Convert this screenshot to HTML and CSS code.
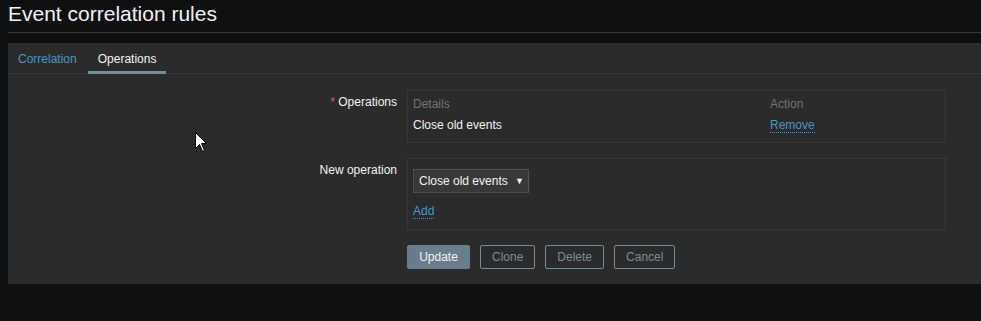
FILE: index.html
```html
<!DOCTYPE html>
<html lang="en">
<head>
    <meta charset="UTF-8">
    <title>Event correlation rules</title>
    <link rel="stylesheet" href="styles.css">
</head>
<body>
    <div class="page">
        <div class="header-title">
            <h1>Event correlation rules</h1>
        </div>

        <div class="panel">
            <ul class="tabs">
                <li><a href="#">Correlation</a></li>
                <li class="active"><a href="#">Operations</a></li>
            </ul>

            <div class="form">
                <div class="form-row">
                    <label class="form-label"><span class="required">*</span> Operations</label>
                    <div class="form-field">
                        <div class="field-box ops-table">
                            <div class="th">Details</div>
                            <div class="th">Action</div>
                            <div class="td">Close old events</div>
                            <div class="td"><a class="link" href="#">Remove</a></div>
                        </div>
                    </div>
                </div>

                <div class="form-row">
                    <label class="form-label">New operation</label>
                    <div class="form-field">
                        <div class="field-box new-op">
                            <div class="select">Close old events <span class="arrow">&#9660;</span></div>
                            <div class="add-line"><a class="link" href="#">Add</a></div>
                        </div>
                    </div>
                </div>

                <div class="form-row">
                    <div class="form-label"></div>
                    <div class="form-field buttons">
                        <button class="btn btn-main">Update</button>
                        <button class="btn btn-alt">Clone</button>
                        <button class="btn btn-alt">Delete</button>
                        <button class="btn btn-alt">Cancel</button>
                    </div>
                </div>
            </div>
        </div>
    </div>

    <!-- mouse pointer captured in the screenshot -->
    <svg class="cursor" width="13" height="21" viewBox="0 0 13 21">
        <path d="M0.5 0.5 L0.5 16.5 L4.5 12.5 L7.5 19.5 L9.5 18.5 L6.5 11.5 L11.5 11.5 Z" fill="#fff" stroke="#000" stroke-width="1"/>
    </svg>
</body>
</html>
```

FILE: styles.css
```css
body {
    margin: 0;
    background: #0e1012;
    color: #f2f2f2;
    font-family: "Liberation Sans", Arial, sans-serif;
    font-size: 12px;
}
.page {
    margin-left: 8px;
}
.header-title {
    height: 32px;
    border-bottom: 1px solid #383838;
    margin-bottom: 10px;
}
.header-title h1 {
    margin: 0;
    font-size: 21px;
    font-weight: normal;
    line-height: 28px;
    color: #f2f2f2;
}
.panel {
    background: #2b2b2b;
    padding-bottom: 15px;
}
.tabs {
    list-style: none;
    margin: 0;
    padding: 0;
    display: flex;
    gap: 1px;
    border-bottom: 1px solid #383838;
    height: 30px;
}
.tabs li a {
    display: block;
    padding: 1px 10px 0;
    line-height: 30px;
    color: #4796c4;
    text-decoration: none;
}
.tabs li.active a {
    color: #f2f2f2;
    border-bottom: 3px solid #768d99;
    height: 27px;
}
.form {
    padding-top: 16px;
}
.form-row {
    display: flex;
    margin-bottom: 15px;
}
.form-row:last-child {
    margin-bottom: 0;
}
.form-label {
    width: 389px;
    padding-right: 10px;
    text-align: right;
    padding-top: 5px;
    line-height: 14px;
    flex-shrink: 0;
}
.required {
    color: #e45959;
}
.form-field {
    width: 539px;
}
.field-box {
    border: 1px solid #383838;
}
.ops-table {
    display: grid;
    grid-template-columns: 1fr 170px;
    padding: 6px 5px 10px;
    height: 35px;
}
.th {
    color: #737373;
    line-height: 14px;
}
.td {
    line-height: 14px;
    margin-top: 7px;
}
.link {
    color: #4796c4;
    text-decoration: none;
    border-bottom: 1px dotted #4796c4;
}
.new-op {
    padding: 10px 5px 11px;
}
.select {
    display: inline-block;
    box-sizing: border-box;
    height: 24px;
    width: 116px;
    line-height: 22px;
    padding-left: 5px;
    background: #383838;
    border: 1px solid #4f4f4f;
    color: #f2f2f2;
}
.arrow {
    font-size: 9px;
    margin-left: 4px;
    vertical-align: 1px;
}
.add-line {
    margin-top: 11px;
    line-height: 14px;
}
.buttons {
    display: flex;
    gap: 10px;
}
.btn {
    height: 24px;
    padding: 0 11px;
    font-family: inherit;
    font-size: 12px;
    border-radius: 2px;
    cursor: pointer;
}
.btn-main {
    background: #697d8a;
    border: 1px solid #697d8a;
    color: #f2f2f2;
    width: 63px;
}
.btn-alt {
    background: transparent;
    border: 1px solid #768d99;
    color: #768d99;
}
.cursor {
    position: absolute;
    left: 195px;
    top: 132px;
}
```
